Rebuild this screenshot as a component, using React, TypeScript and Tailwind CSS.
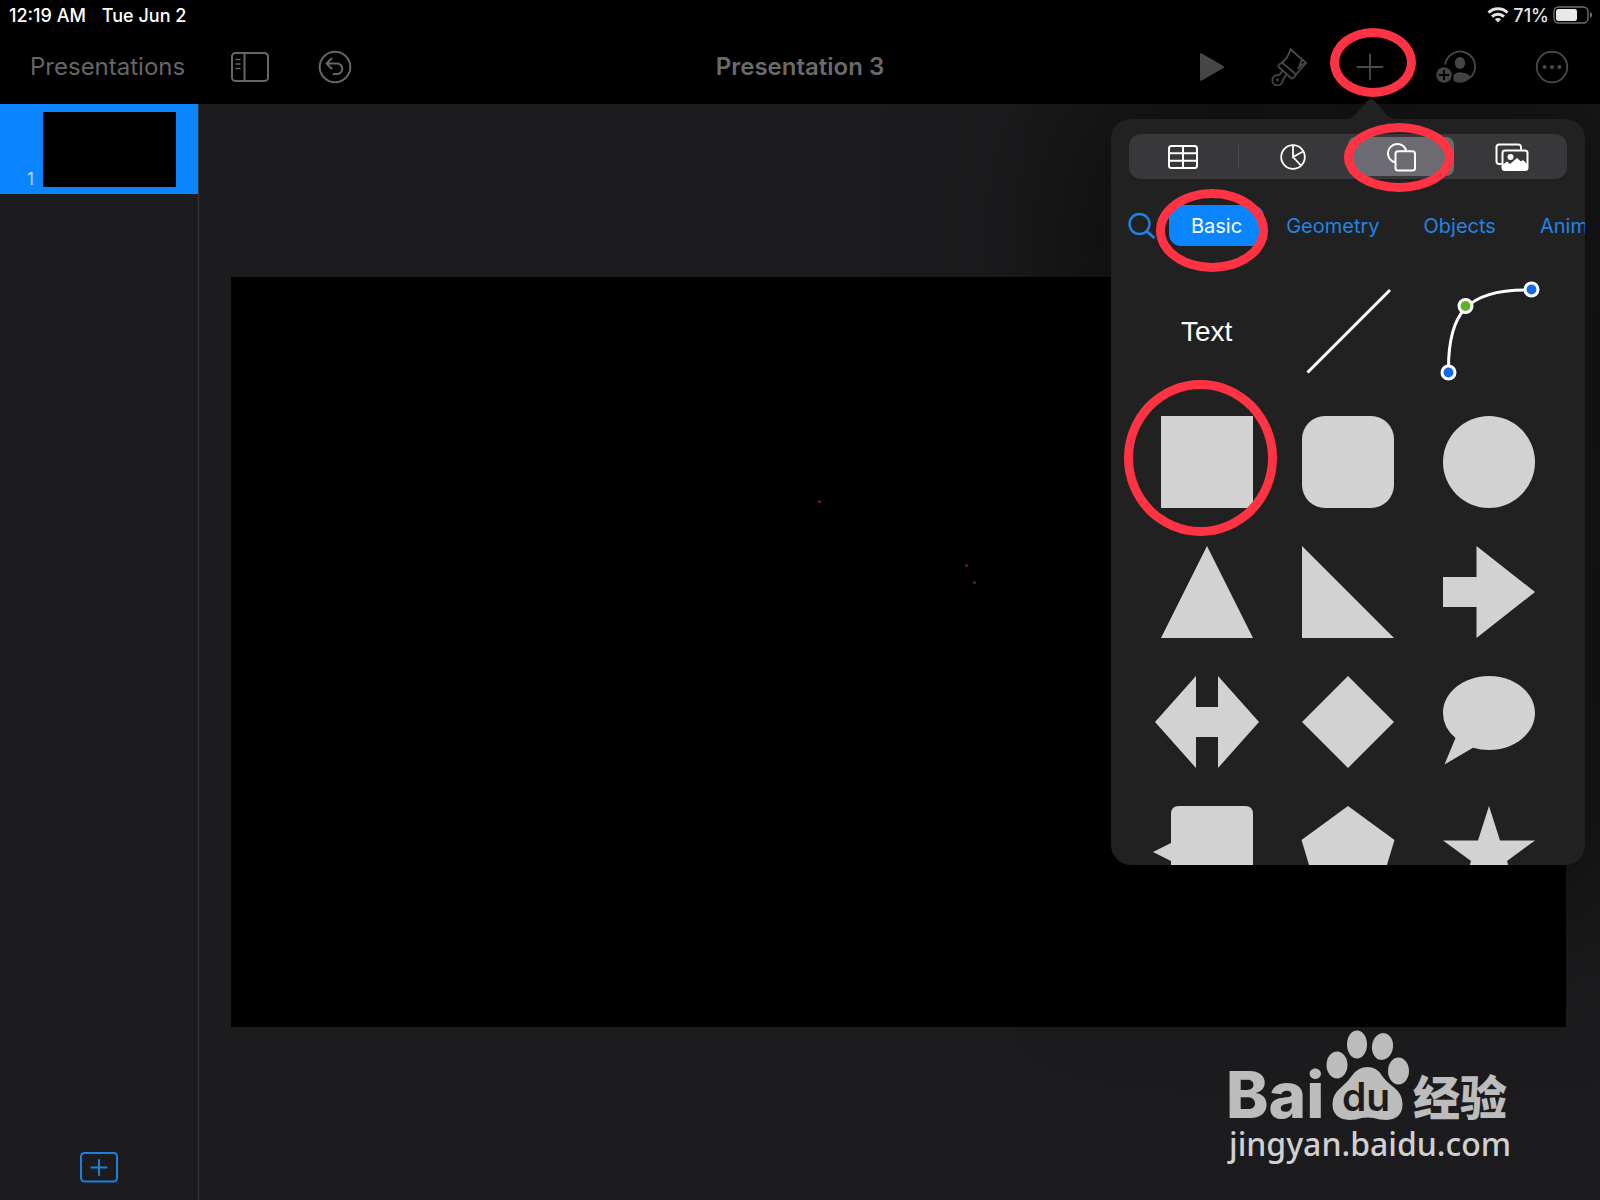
import { clsx } from "clsx";
import { useState } from "react";
import type { ReactNode } from "react";

/* ─── Status bar ─── */
function StatusBar() {
  return (
    <div className="flex h-[30px] items-center justify-between pr-2 pl-[9px] text-[18px] font-medium text-white">
      <div className="flex gap-4">
        <span>12:19 AM</span>
        <span>Tue Jun 2</span>
      </div>
      <div className="flex items-center gap-1">
        <svg width="22" height="16" viewBox="0 0 22 16" fill="none" stroke="#fff" strokeWidth="3">
          <path d="M1.5 5.6a13.6 13.6 0 0 1 19 0" />
          <path d="M5 9.6a8.6 8.6 0 0 1 12 0" />
          <path d="M11 15.4 7.9 12.2a4.4 4.4 0 0 1 6.2 0Z" fill="#fff" stroke="none" />
        </svg>
        <span>71%</span>
        <svg width="39" height="18" viewBox="0 0 39 18" fill="none">
          <rect x="1" y="1" width="34" height="16" rx="4.5" stroke="#7a7a7a" strokeWidth="1.4" />
          <rect x="3" y="3" width="21" height="12" rx="2.5" fill="#fff" />
          <path d="M37 6v6c1.4-.6 2-1.7 2-3s-.6-2.4-2-3Z" fill="#7a7a7a" />
        </svg>
      </div>
    </div>
  );
}

/* ─── Toolbar ─── */
function ToolButton({ label, className, children }: { label: string; className: string; children: ReactNode }) {
  return (
    <button type="button" aria-label={label} className={clsx("flex h-12 items-center justify-center", className)}>
      {children}
    </button>
  );
}

function Toolbar() {
  return (
    <header className="grid h-[74px] grid-cols-[1fr_auto_1fr] items-center text-[#666]">
      <div className="flex items-center pl-[30px]">
        <button type="button" className="text-[24px]">
          Presentations
        </button>
        <ToolButton label="View options" className="ml-10 w-[50px]">
          <svg width="40" height="32" viewBox="0 0 40 32" fill="none" stroke="currentColor" strokeWidth="2">
            <rect x="2" y="2" width="36" height="28" rx="3.5" />
            <path d="M14.5 2v28" />
            <path d="M5.5 8.5h5M5.5 13h5M5.5 17.5h5" strokeWidth="1.4" />
          </svg>
        </ToolButton>
        <ToolButton label="Undo" className="ml-9 w-12">
          <svg width="34" height="34" viewBox="0 0 34 34" fill="none" stroke="currentColor" strokeWidth="2">
            <circle cx="17" cy="17" r="15.3" />
            <path
              d="m13.5 8.5-5 5 5 5M8.5 13.5H19a5.3 5.3 0 0 1 0 10.6h-3.5"
              strokeLinecap="round"
              strokeLinejoin="round"
            />
          </svg>
        </ToolButton>
      </div>

      <h1 className="text-[24px] font-semibold text-[#6a6a6a]">Presentation 3</h1>

      <div className="flex items-center justify-end gap-10 pr-4 text-[#5e5e5e]">
        <ToolButton label="Play" className="w-8">
          <svg width="26" height="30" viewBox="0 0 26 30" fill="currentColor">
            <path d="M1 2.5Q1 .5 2.8 1.5L24.5 14q1.3 1 0 2L2.8 28.5Q1 29.5 1 27.5Z" />
          </svg>
        </ToolButton>
        <ToolButton label="Format" className="w-10">
          <svg
            width="38"
            height="40"
            viewBox="0 0 38 40"
            fill="none"
            stroke="currentColor"
            strokeWidth="1.9"
            strokeLinejoin="round"
            strokeLinecap="round"
          >
            <path d="M21.5 2.2 37 16 27 27.5 13 15.5Q19 11 21.5 2.2Z" />
            <path d="M36.5 16.5Q32 17.5 29 21.5M33 13l-2.5 5.5" />
            <path d="m13 15.5-3 2.3q-1.2 1.2 0 2.4L22 31q1.4 1 2.4-.2L27 27.5" />
            <path d="m13.500 23.5-1.8 3q-.9 1.2-3 1.5a5.2 5.2 0 1 0 5 6q.2-1.8 1.3-3l2.5-3.500" />
            <circle cx="8.5" cy="33" r=".6" />
          </svg>
        </ToolButton>
        <ToolButton label="Insert" className="w-11">
          <svg width="28" height="28" viewBox="0 0 28 28" stroke="#666" strokeWidth="1.8" strokeLinecap="round">
            <path d="M14 1.5v25M1.5 14h25" />
          </svg>
        </ToolButton>
        <ToolButton label="Collaborate" className="w-12">
          <svg width="40" height="34" viewBox="0 0 40 34" fill="none">
            <path d="M9.2 14.5A15 15 0 1 1 34 27.8" stroke="currentColor" strokeWidth="1.8" />
            <ellipse cx="24" cy="13" rx="5.2" ry="6" fill="currentColor" />
            <path d="M17.5 31v-5.5q2.5-3.3 6.5-3.3 7 .3 11 4.8-3 4.5-9.5 5.7-4.5.3-8-1.7Z" fill="currentColor" />
            <circle cx="8" cy="25" r="7.8" fill="currentColor" />
            <path d="M8 20v10M3 25h10" stroke="#000" strokeWidth="1.8" />
          </svg>
        </ToolButton>
        <ToolButton label="More" className="w-16">
          <svg width="34" height="34" viewBox="0 0 34 34">
            <circle cx="17" cy="17" r="15.3" fill="none" stroke="currentColor" strokeWidth="1.8" />
            <g fill="currentColor">
              <circle cx="9.6" cy="17" r="2" />
              <circle cx="17" cy="17" r="2" />
              <circle cx="24.4" cy="17" r="2" />
            </g>
          </svg>
        </ToolButton>
      </div>
    </header>
  );
}

/* ─── Slide navigator ─── */
function Navigator() {
  return (
    <aside className="flex w-[199px] shrink-0 flex-col border-r border-[#38383a] bg-[#1c1c1e]">
      <button type="button" aria-label="Slide 1" className="flex h-[90px] items-center bg-[#0b84ff]">
        <span className="w-[43px] self-end pr-[9px] pb-0.5 text-right text-[17px] text-[#b5dcff]">1</span>
        <span className="h-[75px] w-[133px] bg-black" />
      </button>
      <button type="button" aria-label="Add slide" className="mx-auto mt-auto mb-[17px]">
        <svg width="38" height="31" viewBox="0 0 38 31" fill="none" stroke="#1f7fe0" strokeWidth="2">
          <rect x="1" y="1" width="36" height="28.5" rx="3.5" />
          <path d="M19 8v15M11.5 15.5h15" strokeLinecap="round" />
        </svg>
      </button>
    </aside>
  );
}

/* ─── Insert popover ─── */
const KINDS = [
  {
    name: "Tables",
    icon: (
      <svg width="32" height="26" viewBox="0 0 32 26" fill="none" stroke="#fff" strokeWidth="2">
        <rect x="2" y="2" width="28" height="22" rx="2.5" />
        <path d="M2 9.3h28M2 16.7h28M16 2v22" />
      </svg>
    ),
  },
  {
    name: "Charts",
    icon: (
      <svg width="28" height="28" viewBox="0 0 28 28" fill="none" stroke="#fff" strokeWidth="1.8">
        <circle cx="14" cy="14" r="11.8" />
        <path d="M14 2v12l10-5.5M14 14l8 8.5" />
      </svg>
    ),
  },
  {
    name: "Shapes",
    icon: (
      <svg width="30" height="30" viewBox="0 0 30 30" fill="none" stroke="#fff" strokeWidth="2">
        <path d="M9 20.3a9.3 9.3 0 1 1 11.2-11.6" />
        <rect x="9.5" y="9.3" width="19.5" height="19.2" rx="2.5" />
      </svg>
    ),
  },
  {
    name: "Media",
    icon: (
      <svg width="34" height="28" viewBox="0 0 34 28" fill="none" stroke="#fff" strokeWidth="2">
        <path d="M6.5 21H4a2.5 2.5 0 0 1-2.5-2.5V4A2.5 2.5 0 0 1 4 1.5h19.5A2.5 2.5 0 0 1 26 4v2.5" />
        <rect x="7.5" y="7.5" width="25" height="19.5" rx="2.5" />
        <path d="m8 21.5 4-3 3 2.5 7-6 4 3.5 2-1.5 4 4V27H8Z" fill="#fff" stroke="none" />
        <circle cx="15.5" cy="14" r="3" fill="#fff" stroke="none" />
      </svg>
    ),
  },
];

const CATEGORIES = ["Basic", "Geometry", "Objects", "Animals"];

// every shape is drawn in a 92 unit box
const SHAPES: { name: string; art: ReactNode }[] = [
  {
    name: "Line",
    art: <path d="m5.500 86.500 82.500-82.500" stroke="#fff" strokeWidth="3" />,
  },
  {
    name: "Curve",
    art: (
      <>
        <path d="M5.5 86.5C4.5 29 22 2 88.5 4" fill="none" stroke="#fff" strokeWidth="3" />
        <g stroke="#fff" strokeWidth="3">
          <circle cx="5.5" cy="86.5" r="6.5" fill="#1769e0" />
          <circle cx="22.5" cy="20" r="6.5" fill="#61b02e" />
          <circle cx="88.5" cy="3.5" r="6.5" fill="#1769e0" />
        </g>
      </>
    ),
  },
  { name: "Square", art: <rect width="92" height="92" /> },
  { name: "Rounded square", art: <rect width="92" height="92" rx="23" /> },
  { name: "Circle", art: <circle cx="46" cy="46" r="46" /> },
  { name: "Triangle", art: <path d="M46 0 92 92H0Z" /> },
  { name: "Right triangle", art: <path d="M0 0 92 92H0Z" /> },
  { name: "Arrow", art: <path d="M0 31h33.5V0L92 46 33.5 92V61H0Z" /> },
  { name: "Double arrow", art: <path d="m-6 46 41-46v31h22V0l41 46-41 46V61H35v31Z" /> },
  { name: "Diamond", art: <path d="m46 0 46 46-46 46L0 46Z" /> },
  {
    name: "Speech bubble",
    art: (
      <path d="M46 0c25.4 0 46 16.5 46 37S71.4 74 46 74q-8.5 0-16-2.2L1.5 88.5 12.5 62Q0 51.5 0 37C0 16.5 20.6 0 46 0Z" />
    ),
  },
  {
    name: "Callout",
    art: <path d="M18 0h66q8 0 8 8v76q0 8-8 8H18q-8 0-8-8V55L-8 46l18-9V8q0-8 8-8Z" />,
  },
  { name: "Pentagon", art: <path d="m46 0 46.5 34L75 92H17L-.5 34Z" /> },
  { name: "Star", art: <path d="m46 0 11 34.5h35L64 55l11 37-29-21-29 21 11-37L0 34.5h35Z" /> },
];

function InsertPopover() {
  const [kind, setKind] = useState("Shapes");
  const [category, setCategory] = useState("Basic");

  return (
    <section aria-label="Insert" className="absolute top-[119px] right-[15px] w-[474px]">
      <svg className="absolute -top-5 left-[236px]" width="48" height="20" viewBox="0 0 48 20" fill="#222">
        <path d="M0 20q6-1 10-6L19 3q5-6 10 0l9 11q4 5 10 6Z" />
      </svg>
      <div className="h-[746px] overflow-hidden rounded-[20px] bg-[#212121] pt-[15px] shadow-[0_0_160px_40px_rgba(0,0,0,0.6)]">
        <div className="mx-[18px] flex h-[45px] rounded-xl bg-[#38383b] py-[3px]">
          {KINDS.map(({ name, icon }, i) => (
            <button
              key={name}
              type="button"
              aria-label={name}
              aria-pressed={kind === name}
              onClick={() => setKind(name)}
              className="flex flex-1 items-center"
            >
              <span
                className={clsx(
                  "flex h-full flex-1 items-center justify-center rounded-lg",
                  kind === name && "mr-1 bg-[#6b6b71]",
                )}
              >
                {icon}
              </span>
              {i === 0 && <span className="h-6 w-px bg-[#4c4c50]" />}
            </button>
          ))}
        </div>

        <div className="mt-[26px] flex h-[41px] items-center pl-[17px]">
          <button type="button" aria-label="Search shapes">
            <svg width="28" height="28" viewBox="0 0 28 28" fill="none" stroke="#1d80e4" strokeWidth="2.4">
              <circle cx="11.5" cy="12" r="10" />
              <path d="m18.8 19.3 7.5 6.7" strokeWidth="3" />
            </svg>
          </button>
          <div className="ml-[13px] flex h-full">
            {CATEGORIES.map((name) => (
              <button
                key={name}
                type="button"
                onClick={() => setCategory(name)}
                className={clsx(
                  "rounded-xl px-[22px] text-[20px]",
                  category === name ? "bg-[#0b84ff] text-white" : "text-[#2384e4]",
                )}
              >
                {name}
              </button>
            ))}
          </div>
        </div>

        <div className="mx-[25px] mt-10 grid grid-cols-3 justify-items-center gap-y-[38px]">
          <button type="button" className="size-[92px] font-['Liberation_Sans',sans-serif] text-[28px] text-white">
            Text
          </button>
          {SHAPES.map(({ name, art }) => (
            <button key={name} type="button" aria-label={name} className="size-[92px]">
              <svg className="overflow-visible" width="92" height="92" viewBox="0 0 92 92" fill="#d2d2d2">
                {art}
              </svg>
            </button>
          ))}
        </div>
      </div>
    </section>
  );
}

/* ─── Red marks drawn over the interface ─── */
function Highlights() {
  return (
    <div aria-hidden="true" className="pointer-events-none">
      <span className="absolute top-7 right-[184px] h-[69px] w-[86px] rounded-[50%] border-9 border-[#ff3343]" />
      <span className="absolute top-[123px] right-[146px] h-[69px] w-[110px] rounded-[50%] border-9 border-[#ff3343]" />
      <span className="absolute top-[189px] right-[332px] h-[83px] w-[112px] rounded-[50%] border-9 border-[#ff3343]" />
      <span className="absolute top-[380px] right-[323px] h-[156px] w-[153px] rounded-[50%] border-9 border-[#ff3343]" />
    </div>
  );
}

/* ─── Watermark ─── */
function Watermark() {
  return (
    <div className="pointer-events-none absolute right-[80px] bottom-[30px]">
      <svg width="300" height="142" viewBox="0 -11 300 142" fill="#bcbcbc" role="img" aria-label="Baidu jingyan">
        <text x="6" y="79" fontFamily="Inter, sans-serif" fontWeight="800" fontSize="64">
          Bai
        </text>
        <ellipse cx="117" cy="26" rx="10.5" ry="13.5" />
        <ellipse cx="137" cy="5.5" rx="10" ry="14" />
        <ellipse cx="162.5" cy="7.5" rx="10.5" ry="13.5" transform="rotate(8 162.5 7.5)" />
        <ellipse cx="178.5" cy="32" rx="10.5" ry="13.5" />
        <path d="M147.5 28q9 0 14 8 4 6 12 12 9 7 9 17 0 15-16 16-7 0-13-2-6-1-12 0-5 2-12 2-17-1-17-16 0-10 9-17 7-6 11-12 6-8 15-8Z" />
        <text x="122" y="72" fill="#1c1c1e" fontFamily="Inter, sans-serif" fontWeight="600" fontSize="39">
          du
        </text>
        <text x="193" y="76" fontFamily="'Noto Sans CJK SC', sans-serif" fontWeight="900" fontSize="47">
          经验
        </text>
        <text x="9" y="117" fill="#d0d0d0" fontFamily="'Noto Sans', sans-serif" fontWeight="500" fontSize="32">
          jingyan.baidu.com
        </text>
      </svg>
    </div>
  );
}

export default function App() {
  return (
    <div className="relative flex min-h-screen flex-col overflow-hidden bg-black font-[Inter,sans-serif]">
      <StatusBar />
      <Toolbar />
      <div className="flex flex-1">
        <Navigator />
        <main className="flex flex-1 items-center bg-[#1c1c1e] pr-[34px] pl-8">
          <div className="relative aspect-video w-full bg-black">
            {/* stray pen dots on the slide */}
            <span className="absolute top-[29.7%] left-[44%] size-[3px] rounded-full bg-[#7a1c26]" />
            <span className="absolute top-[38.3%] left-[55%] size-[3px] rounded-full bg-[#7a1c26]" />
            <span className="absolute top-[40.6%] left-[55.6%] size-[3px] rounded-full bg-[#7a1c26]" />
          </div>
        </main>
      </div>
      <InsertPopover />
      <Highlights />
      <Watermark />
    </div>
  );
}
